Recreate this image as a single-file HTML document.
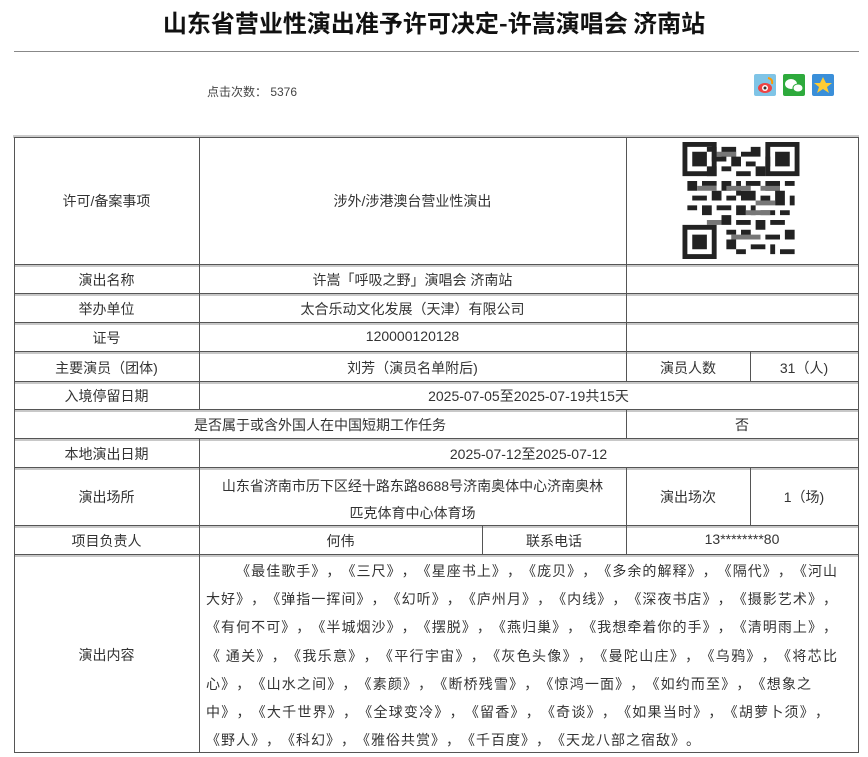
<!DOCTYPE html>
<html><head><meta charset="utf-8"><style>
*{margin:0;padding:0;box-sizing:border-box}
body{width:868px;height:757px;background:#fff;position:relative;overflow:hidden;font-family:"Liberation Sans","Noto Sans CJK SC",sans-serif;color:#333}
.t{position:absolute;font-size:14px;white-space:nowrap;text-align:center}
.h{position:absolute;background:#555;height:1px}
.h2{position:absolute;background:#c8c8c8;height:2px}
.v{position:absolute;background:#555;width:1px}
.c{position:absolute;left:206px;width:632px;font-size:14px;font-family:'Noto Sans CJK SC',sans-serif;white-space:nowrap;text-align:justify;text-align-last:justify;text-spacing-trim:space-all;letter-spacing:1px;height:28px;line-height:28px}
</style></head><body>
<div style="position:absolute;left:0;top:4px;width:868px;text-align:center;font-size:24px;font-weight:bold;color:#111;font-family:'Noto Sans CJK SC',sans-serif">山东省营业性演出准予许可决定-许嵩演唱会 济南站</div>
<div style="position:absolute;left:14px;top:51px;width:845px;height:1px;background:#888"></div>
<div style="position:absolute;left:207px;top:83px;font-size:12px;color:#444">点击次数：&nbsp;5376</div>
<svg style="position:absolute;left:753px;top:73px" width="84" height="25">
<rect x="1" y="1" width="22" height="22" rx="2" fill="#7fc4e6"/><ellipse cx="12" cy="15" rx="7" ry="5" fill="#e44"/><circle cx="12" cy="15" r="3" fill="#fff"/><circle cx="12" cy="15" r="1.5" fill="#333"/><path d="M15 5 Q20 6 19 11" stroke="#f90" stroke-width="2" fill="none"/>
<rect x="30" y="1" width="22" height="22" rx="2" fill="#2eaa3c"/><ellipse cx="38" cy="11" rx="6" ry="5" fill="#fff"/><ellipse cx="45" cy="15" rx="5" ry="4" fill="#fff" stroke="#2eaa3c"/>
<rect x="59" y="1" width="22" height="22" rx="2" fill="#3a8fd9"/><polygon points="70,4 73,10 79,10 74,14 76,20 70,16 64,20 66,14 61,10 67,10" fill="#fc3"/>
</svg>

<div style="position:absolute;left:13px;top:135px;width:846px;height:3px;background:#ccc"></div>
<div class="h" style="left:14px;top:137px;width:845px"></div>
<div class="h" style="left:14px;top:264px;width:845px"></div><div class="h2" style="left:14px;top:265px;width:845px"></div>
<div class="h" style="left:14px;top:293px;width:845px"></div><div class="h2" style="left:14px;top:294px;width:845px"></div>
<div class="h" style="left:14px;top:322px;width:845px"></div><div class="h2" style="left:14px;top:323px;width:845px"></div>
<div class="h" style="left:14px;top:351px;width:845px"></div><div class="h2" style="left:14px;top:352px;width:845px"></div>
<div class="h" style="left:14px;top:381px;width:845px"></div><div class="h2" style="left:14px;top:382px;width:845px"></div>
<div class="h" style="left:14px;top:409px;width:845px"></div><div class="h2" style="left:14px;top:410px;width:845px"></div>
<div class="h" style="left:14px;top:438px;width:845px"></div><div class="h2" style="left:14px;top:439px;width:845px"></div>
<div class="h" style="left:14px;top:467px;width:845px"></div><div class="h2" style="left:14px;top:468px;width:845px"></div>
<div class="h" style="left:14px;top:525px;width:845px"></div><div class="h2" style="left:14px;top:526px;width:845px"></div>
<div class="h" style="left:14px;top:554px;width:845px"></div><div class="h2" style="left:14px;top:555px;width:845px"></div>
<div class="h" style="left:14px;top:752px;width:845px"></div>
<div class="v" style="left:14px;top:137px;height:616px"></div>
<div class="v" style="left:858px;top:137px;height:616px"></div>
<div class="v" style="left:199px;top:137px;height:273px"></div>
<div class="v" style="left:199px;top:439px;height:314px"></div>
<div class="v" style="left:626px;top:137px;height:245px"></div>
<div class="v" style="left:626px;top:410px;height:29px"></div>
<div class="v" style="left:626px;top:468px;height:87px"></div>
<div class="v" style="left:750px;top:352px;height:30px"></div>
<div class="v" style="left:750px;top:468px;height:58px"></div>
<div class="v" style="left:482px;top:526px;height:29px"></div>

<svg style="position:absolute;left:681px;top:142px" width="120" height="117" viewBox="0 0 24 24">
<rect width="24" height="24" fill="#fff"/>
<g fill="#222">
<path d="M5 1h2v1H5zM8 1h3v2H8zM12 2h2v1h-2zM14 1h2v2h-2zM6 3h3v1H6zM10 3h2v2h-2zM13 4h2v1h-2zM5 5h2v2H5zM8 5h2v1H8zM11 6h3v1h-3zM15 5h2v2h-2zM17 3h1v2h-1zM1 8h2v2H1zM4 8h3v1H4zM8 8h2v2H8zM11 8h1v3h-1zM13 8h3v1h-3zM17 8h3v2h-3zM21 8h2v1h-2zM2 11h3v1H2zM6 10h2v2H6zM9 11h2v1H9zM12 10h3v2h-3zM16 11h2v1h-2zM19 10h2v3h-2zM22 11h1v2h-1zM1 13h2v1H1zM4 13h2v2H4zM7 13h3v1H7zM11 13h2v2h-2zM14 13h1v2h-1zM16 14h3v1h-3zM20 14h2v1h-2zM8 15h2v2H8zM11 16h3v1h-3zM15 16h2v2h-2zM18 16h3v1h-3zM9 18h2v1H9zM12 18h2v2h-2zM17 19h3v1h-3zM21 18h2v2h-2zM9 20h2v2H9zM14 21h3v1h-3zM18 21h1v2h-1zM20 22h3v1h-3zM11 22h2v1h-2z"/>
<path fill="#777" d="M6 2h5v1H6zM3 9h4v1H3zM9 9h5v1H9zM15 12h4v1h-4zM5 16h3v1H5zM13 14h5v1h-5zM10 19h6v1h-6zM16 9h4v1h-4z"/>
<path d="M0 0h7v7H0zM1 1v5h5V1zM2 2h3v3H2zM17 0h7v7h-7zM18 1v5h5V1zM19 2h3v3h-3zM0 17h7v7H0zM1 18v5h5v-5zM2 19h3v3H2z" fill-rule="evenodd"/>
</g></svg>

<div class="t" style="left:14px;width:185px;top:191px">许可/备案事项</div>
<div class="t" style="left:199px;width:427px;top:191px">涉外/涉港澳台营业性演出</div>
<div class="t" style="left:14px;width:185px;top:270px">演出名称</div>
<div class="t" style="left:199px;width:427px;top:270px">许嵩「呼吸之野」演唱会 济南站</div>
<div class="t" style="left:14px;width:185px;top:299px">举办单位</div>
<div class="t" style="left:199px;width:427px;top:299px">太合乐动文化发展（天津）有限公司</div>
<div class="t" style="left:14px;width:185px;top:328px">证号</div>
<div class="t" style="left:199px;width:427px;top:328px">120000120128</div>
<div class="t" style="left:14px;width:185px;top:358px">主要演员（团体)</div>
<div class="t" style="left:199px;width:427px;top:358px">刘芳（演员名单附后)</div>
<div class="t" style="left:626px;width:124px;top:358px">演员人数</div>
<div class="t" style="left:750px;width:108px;top:358px">31（人)</div>
<div class="t" style="left:14px;width:185px;top:386px">入境停留日期</div>
<div class="t" style="left:199px;width:659px;top:386px">2025-07-05至2025-07-19共15天</div>
<div class="t" style="left:14px;width:612px;top:415px">是否属于或含外国人在中国短期工作任务</div>
<div class="t" style="left:626px;width:232px;top:415px">否</div>
<div class="t" style="left:14px;width:185px;top:444px">本地演出日期</div>
<div class="t" style="left:199px;width:659px;top:444px">2025-07-12至2025-07-12</div>
<div class="t" style="left:14px;width:185px;top:487px">演出场所</div>
<div class="t" style="left:199px;width:427px;top:473px;line-height:27px">山东省济南市历下区经十路东路8688号济南奥体中心济南奥林<br>匹克体育中心体育场</div>
<div class="t" style="left:626px;width:124px;top:487px">演出场次</div>
<div class="t" style="left:750px;width:108px;top:487px">1（场)</div>
<div class="t" style="left:14px;width:185px;top:531px">项目负责人</div>
<div class="t" style="left:199px;width:283px;top:531px">何伟</div>
<div class="t" style="left:482px;width:144px;top:531px">联系电话</div>
<div class="t" style="left:626px;width:232px;top:531px">13********80</div>
<div class="t" style="left:14px;width:185px;top:645px">演出内容</div>
<div class="c" style="top:557px">　　《最佳歌手》，《三尺》，《星座书上》，《庞贝》，《多余的解释》，《隔代》，《河山</div>
<div class="c" style="top:585px">大好》，《弹指一挥间》，《幻听》，《庐州月》，《内线》，《深夜书店》，《摄影艺术》，</div>
<div class="c" style="top:613px">《有何不可》，《半城烟沙》，《摆脱》，《燕归巢》，《我想牵着你的手》，《清明雨上》，</div>
<div class="c" style="top:642px">《 通关》，《我乐意》，《平行宇宙》，《灰色头像》，《曼陀山庄》，《乌鸦》，《将芯比</div>
<div class="c" style="top:670px;width:606px">心》，《山水之间》，《素颜》，《断桥残雪》，《惊鸿一面》，《如约而至》，《想象之</div>
<div class="c" style="top:698px;width:624px">中》，《大千世界》，《全球变冷》，《留香》，《奇谈》，《如果当时》，《胡萝卜须》，</div>
<div class="c" style="top:726px;text-align:left;text-align-last:left">《野人》，《科幻》，《雅俗共赏》，《千百度》，《天龙八部之宿敌》。</div>
</body></html>
